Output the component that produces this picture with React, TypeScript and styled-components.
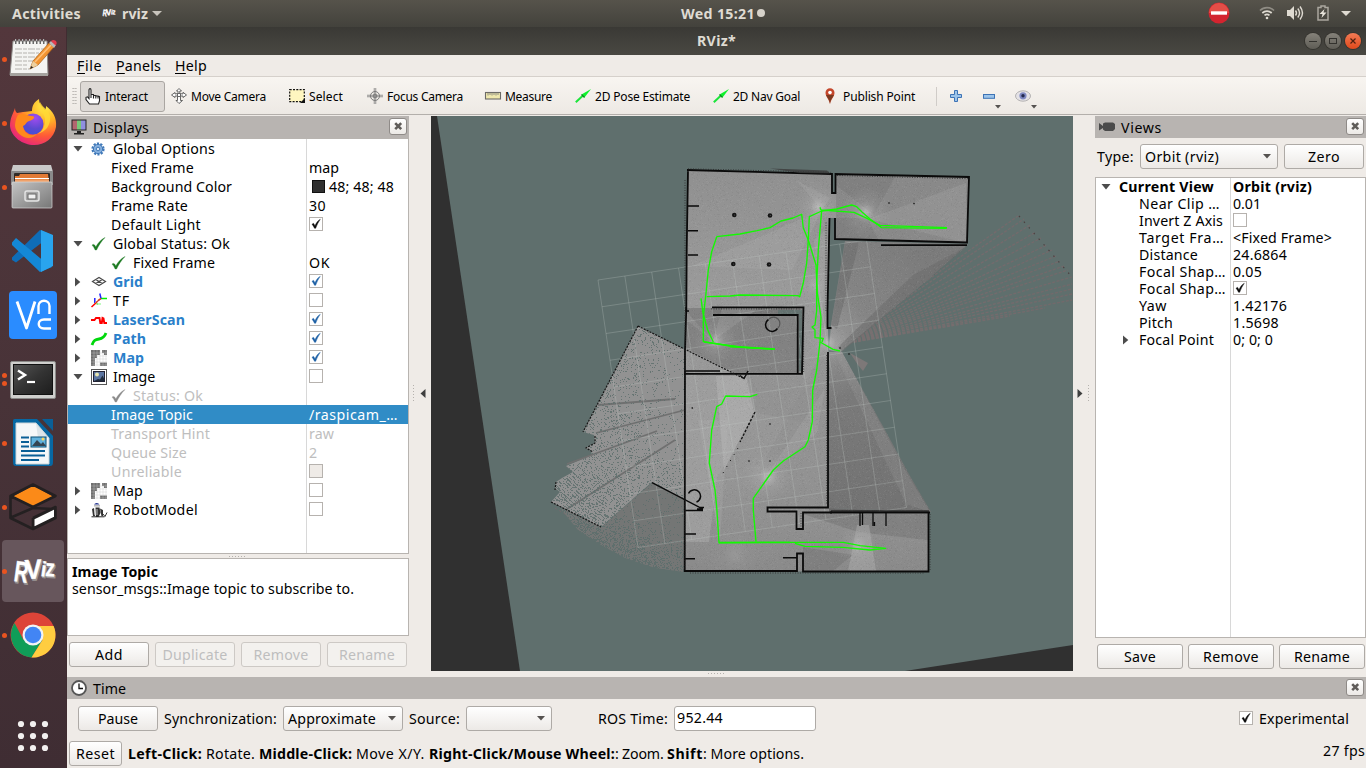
import React, { useLayoutEffect, useRef } from "react";
import styled, { createGlobalStyle, css } from "styled-components";

const GlobalStyle = createGlobalStyle`
  *, *::before, *::after { box-sizing: border-box; }
  body { margin: 0; overflow: hidden; }
  svg { display: block; flex: none; overflow: visible; }
`;

/* ---------- text ---------- */

const TextSpan = styled.span<{ $bold?: boolean }>`
  display: inline-block;
  white-space: pre;
  flex: none;
  ${(p) => p.$bold && css`font-weight: 700;`}
`;

/** Text tracked so that it fills the advance width `w`. */
function Fit({ w, bold, children }: { w: number; bold?: boolean; children: React.ReactNode }) {
  const ref = useRef<HTMLSpanElement>(null);
  useLayoutEffect(() => {
    const el = ref.current;
    if (!el) return;
    el.style.letterSpacing = "0px";
    const natural = el.getBoundingClientRect().width;
    const count = (el.textContent || "").length || 1;
    el.style.letterSpacing = `${(w - natural) / count}px`;
  }, [w, children]);
  return (
    <TextSpan ref={ref} $bold={bold}>
      {children}
    </TextSpan>
  );
}

/* ---------- frame ---------- */

const Screen = styled.div`
  width: 1366px;
  height: 768px;
  display: flex;
  flex-direction: column;
  overflow: hidden;
  background: #efebe7;
  color: #000;
  font: 14.2px/19px "Noto Sans", "Open Sans", sans-serif;
`;

const TopBar = styled.header`
  height: 27px;
  flex: none;
  display: grid;
  grid-template-columns: 681px 1fr auto;
  align-items: center;
  padding-right: 15px;
  padding-bottom: 1px;
  background: linear-gradient(#56534b, #43423c);
  color: #dfdbd2;
  font-weight: 600;
`;
const BarGroup = styled.div<{ $gap?: number; $pad?: number }>`
  display: flex;
  align-items: center;
  gap: ${(p) => p.$gap ?? 0}px;
  padding-left: ${(p) => p.$pad ?? 0}px;
`;
const BarDot = styled.i`
  width: 8px;
  height: 8px;
  border-radius: 50%;
  background: #d6d2ca;
  margin-left: 2px;
`;

const Desktop = styled.div`
  flex: 1;
  min-height: 0;
  display: flex;
`;

const Dock = styled.nav`
  width: 67px;
  flex: none;
  display: flex;
  flex-direction: column;
  gap: 2px;
  padding: 1px 0 0 2px;
  background: linear-gradient(#53373c, #483338 50%, #3f2d33);
  border-right: 1px solid #402c31;
`;
const DockItem = styled.div<{ $active?: boolean; $push?: boolean }>`
  width: 62px;
  height: 62px;
  flex: none;
  display: flex;
  align-items: center;
  border-radius: 4px;
  ${(p) => p.$active && css`background: #67565c;`}
  ${(p) => p.$push && css`margin-top: auto; margin-bottom: 1px;`}
  svg { margin-left: 2px; }
`;
const Running = styled.span`
  width: 5px;
  display: flex;
  flex-direction: column;
  gap: 3px;
  align-items: center;
  flex: none;
  i { width: 5px; height: 5px; border-radius: 50%; background: #e95420; }
`;

const Win = styled.main`
  flex: 1;
  min-width: 0;
  display: flex;
  flex-direction: column;
`;
const TitleBar = styled.div`
  height: 28px;
  flex: none;
  display: flex;
  align-items: center;
  background: linear-gradient(#3a3935, #494842);
  color: #dfdbd2;
  padding: 0 5px 1px 630px;
`;
const WinButtons = styled.div`
  margin-left: auto;
  display: flex;
  gap: 4px;
`;
const WinButton = styled.span<{ $close?: boolean }>`
  width: 16px;
  height: 16px;
  border-radius: 50%;
  display: grid;
  place-items: center;
  background: ${(p) => (p.$close ? "linear-gradient(#f37b55,#e0491b)" : "linear-gradient(#85827a,#5f5d56)")};
  box-shadow: 0 0 0 1px #35342f;
`;

const MenuBar = styled.div`
  height: 22px;
  flex: none;
  display: flex;
  align-items: center;
  gap: 14px;
  padding-left: 10px;
  border-bottom: 1px solid #d5d0cb;
  u { text-underline-offset: 2px; }
`;

const ToolBar = styled.div`
  height: 38px;
  flex: none;
  display: flex;
  align-items: center;
  padding: 1px 0 0 5px;
  background: linear-gradient(#f8f5f1, #ede9e4);
  border-bottom: 1px solid #b3afab;
  font-size: 12px;
`;
const Tool = styled.div<{ $w: number; $on?: boolean }>`
  width: ${(p) => p.$w}px;
  height: 31px;
  flex: none;
  display: flex;
  align-items: center;
  gap: 4px;
  padding-left: 4px;
  border-radius: 3px;
  border: 1px solid transparent;
  ${(p) => p.$on && css`background: #dedad6; border-color: #aaa6a2; margin-right: 1px;`}
`;
const ToolSep = styled.i`
  width: 1px;
  height: 19px;
  background: #d0ccc8;
  margin: 0 13px 0 7px;
`;

const Body = styled.div`
  height: 556px;
  flex: none;
  display: flex;
  padding-top: 1px;
`;

const Grip = styled.i<{ $v?: boolean }>`
  flex: none;
  ${(p) =>
    p.$v
      ? css`width: 4px; height: 18px; background: repeating-linear-gradient(#b5b1ad 0 1px, transparent 1px 3px) 1px 0 / 1px 100% no-repeat;`
      : css`height: 4px; width: 18px; background: repeating-linear-gradient(90deg, #b5b1ad 0 1px, transparent 1px 3px) 0 2px / 100% 1px no-repeat;`}
`;
const ToolGrip = styled.i`
  width: 5px;
  height: 18px;
  margin-right: 3px;
  background: radial-gradient(circle, #b8b4b0 0.7px, transparent 1px) 0 0 / 2.5px 3px repeat;
`;

/* ---------- dock panels ---------- */

const Panel = styled.section<{ $w?: number }>`
  ${(p) => p.$w && css`width: ${p.$w}px;`}
  flex: none;
  display: flex;
  flex-direction: column;
`;
const PanelHead = styled.header`
  height: 22px;
  flex: none;
  display: flex;
  align-items: center;
  background: #b8b4b1;
  gap: 6px;
  padding: 0 2px 0 4px;
`;
const CloseBox = styled.span`
  width: 18px;
  height: 17px;
  margin: -2px 0 0 auto;
  display: grid;
  place-items: center;
  border: 1px solid #8f8b88;
  border-radius: 3px;
  background: linear-gradient(#fff, #ece9e6);
`;

const Tree = styled.div<{ $h: number; $split: number }>`
  height: ${(p) => p.$h}px;
  flex: none;
  border: 1px solid #b8b4b0;
  background: linear-gradient(#d8d8d8, #d8d8d8) ${(p) => p.$split}px 0 / 1px 100% no-repeat, #fff;
`;
const Row = styled.div<{ $h: number; $sel?: boolean; $off?: boolean; $bold?: boolean }>`
  height: ${(p) => p.$h}px;
  display: flex;
  align-items: center;
  ${(p) => p.$off && css`color: #bebebe;`}
  ${(p) => p.$sel && css`background: #308cc6; color: #fff;`}
  ${(p) => p.$bold && css`font-weight: 700;`}
`;
const NameCell = styled.div<{ $w: number; $pad: number; $blue?: boolean }>`
  width: ${(p) => p.$w}px;
  flex: none;
  display: flex;
  align-items: center;
  padding-left: ${(p) => p.$pad}px;
  ${(p) => p.$blue && css`color: #2a7fca; font-weight: 700;`}
`;
const IconSlot = styled.span<{ $w: number }>`
  width: ${(p) => p.$w}px;
  flex: none;
  display: flex;
  align-items: center;
`;
const Box = styled.span<{ $off?: boolean }>`
  width: 14px;
  height: 14px;
  flex: none;
  display: grid;
  place-items: center;
  border: 1px solid #b6b2ae;
  background: ${(p) => (p.$off ? "#efebe7" : "#fff")};
  margin-top: -2px;
`;
const Swatch = styled.i`
  width: 13px;
  height: 13px;
  background: #303030;
  border: 1px solid #111;
  margin: -1px 4px 0 3px;
`;

const HelpBox = styled.div`
  height: 78px;
  flex: none;
  border: 1px solid #b8b4b0;
  background: #fff;
  padding: 4px 4px;
  display: flex;
  flex-direction: column;
  align-items: flex-start;
  line-height: 17px;
`;
const ButtonRow = styled.div<{ $gap: number; $pt: number }>`
  display: flex;
  gap: ${(p) => p.$gap}px;
  padding: ${(p) => p.$pt}px 0 0 2px;
`;
const Button = styled.span<{ $w: number; $off?: boolean; $h?: number }>`
  width: ${(p) => p.$w}px;
  height: ${(p) => p.$h ?? 25}px;
  flex: none;
  display: flex;
  align-items: center;
  justify-content: center;
  border: 1px solid ${(p) => (p.$off ? "#cdc9c5" : "#aeaaa6")};
  border-radius: 3px;
  background: ${(p) => (p.$off ? "#f3f1ee" : "linear-gradient(#fff, #ece9e6)")};
  ${(p) => p.$off && css`color: #bebebe;`}
`;
const Combo = styled(Button)`
  justify-content: space-between;
  padding: 0 6px 0 4px;
`;
const Field = styled(Button)`
  background: #fff;
  justify-content: flex-start;
  padding: 0 0 2px 2px;
`;

const Gutter = styled.div<{ $right?: boolean }>`
  width: 22px;
  flex: none;
  display: flex;
  align-items: center;
  gap: ${(p) => (p.$right ? 4 : 4)}px;
  padding: ${(p) => (p.$right ? "0 0 0 4px" : "0 0 0 3px")};
`;
const GripLine = styled.div<{ $h: number }>`
  height: ${(p) => p.$h}px;
  flex: none;
  display: flex;
  justify-content: center;
`;
const TypeRow = styled.div`
  height: 39px;
  display: flex;
  align-items: center;
  padding: 0 0 2px 2px;
  gap: 6px;
`;
const TimeRow = styled.div`
  height: 40px;
  flex: none;
  display: flex;
  align-items: center;
  padding: 0 17px 1px 11px;
  gap: 6px;
`;
const StatusRow = styled.footer`
  height: 29px;
  flex: none;
  display: flex;
  align-items: center;
  padding-left: 2px;
  gap: 6px;
`;
const StatusText = styled.div`
  display: flex;
`;
const Fps = styled.span`
  margin: -6px 1px 0 auto;
`;
const Spacer = styled.i<{ $w?: number }>`
  ${(p) => (p.$w ? css`width: ${p.$w}px;` : css`flex: 1;`)}
`;

/* ---------- small glyphs ---------- */

const Caret = ({ s = 9 }: { s?: number }) => (
  <svg width={s} height={s / 2 + 0.5} viewBox="0 0 10 5.5"><path d="M0 0h10l-5 5.5z" fill="#555250" /></svg>
);
const Expander = ({ open }: { open: boolean }) =>
  open ? (
    <svg width="10" height="6" viewBox="0 0 10 6"><path d="M.5 0h9L5 5.5z" fill="#4c4c4c" /></svg>
  ) : (
    <svg width="10" height="10" viewBox="0 0 10 10"><path d="M2 .5v9L7.300 5z" fill="#4c4c4c" /></svg>
  );
const Tick = ({ color = "#0a0a0a" }: { color?: string }) => (
  <svg width="10" height="10" viewBox="0 0 10 10">
    <path d="M1 5.200 2.500 4.300 4 6.700C5.200 4 6.600 1.800 9.300.3 7.400 2.900 5.900 6 4.700 9.300H3.500C2.900 7.800 2 6.400 1 5.200Z" fill={color} stroke={color} strokeWidth=".4" />
  </svg>
);
const StatusCheck = ({ color }: { color: string }) => (
  <svg width="15" height="14" viewBox="0 0 15 14">
    <path d="M1 8c1-.8 2-.8 2.600 0l1.200 2C7 6 10 2.600 14 .5 10.500 4.200 7.600 8.400 5.500 13H4.200C3.400 11.200 2.400 9.300 1 8Z" fill={color} stroke={color} strokeWidth=".4" />
  </svg>
);
const Cross = () => (
  <svg width="9" height="9" viewBox="0 0 9 9"><path d="M1.200 1.200l6 6M7.200 1.200l-6 6" stroke="#5f5c59" strokeWidth="2.600" /></svg>
);
const SideArrow = ({ right }: { right?: boolean }) => (
  <svg width="6" height="10" viewBox="0 0 6 10"><path d={right ? "M.5 0v9L5.500 4.500z" : "M5.500 0v9L.5 4.500z"} fill="#3f3f3f" /></svg>
);
const Check = ({ on, blue, off }: { on?: boolean; blue?: boolean; off?: boolean }) => (
  <Box $off={off}>{on && <Tick color={blue ? "#1c5fa5" : undefined} />}</Box>
);

const I: Record<string, React.ReactNode> = {
  gear: (
    <svg width="14" height="14" viewBox="0 0 14 14">
      <circle cx="7" cy="7" r="5.500" fill="none" stroke="#3f78b8" strokeWidth="2.200" strokeDasharray="2.100 1.355" />
      <circle cx="7" cy="7" r="4.600" fill="#86b0de" stroke="#3f78b8" />
      <circle cx="7" cy="7" r="1.800" fill="#d9e7f6" stroke="#3f78b8" />
    </svg>
  ),
  grid: (
    <svg width="16" height="12" viewBox="0 0 16 12"><path d="M1.500 5.500 8 1.500l6.500 4L8 9.500zM4.700 3.500l6.600 4M11.300 3.500l-6.600 4" fill="none" stroke="#4a4a4a" strokeWidth="1.200" /></svg>
  ),
  tf: (
    <svg width="16" height="15" viewBox="0 0 16 15" fill="none" strokeWidth="1.500">
      <path d="M.5 14 6 9M7 7.500l3-2" stroke="#f00" /><path d="M10 5.500h6" stroke="#0e0" /><path d="M5.500 11h4" stroke="#0e0" strokeWidth="1.200" strokeDasharray="2 1" />
      <path d="M3.800 10V5M10 5.500 8.800.5" stroke="#22f" /><path d="M4 10 10 5" stroke="#ff0" strokeWidth=".6" /><path d="M5 9.500l5-4" stroke="#c33" strokeWidth="1.100" />
    </svg>
  ),
  laser: (
    <svg width="16" height="12" viewBox="0 0 16 12"><path d="M0 6h3.500L5 4h3.500l.8 5h1.500L11.500 4l1 .5.8 4.500H16" fill="none" stroke="#f00" strokeWidth="1.900" /></svg>
  ),
  path: (
    <svg width="16" height="14" viewBox="0 0 16 14"><path d="M1 13C2.500 8 4.500 7.500 8 7S13.500 5 15 1" fill="none" stroke="#00d80c" strokeWidth="2.800" /></svg>
  ),
  map: (
    <svg width="16" height="16" viewBox="0 0 16 16">
      <path d="M0 0h9v5H6v3H4v8H0zM11 0h5v5h-3V3h-2zM9 12.500h7V16H9z" fill="#6f6f6f" />
      <path d="M3 0v16M6 0v16M9 0v16M12 0v16M15 0v16M0 3h16M0 6h16M0 9h16M0 12h16M0 15h16" stroke="#c4c4c4" strokeWidth=".4" />
    </svg>
  ),
  image: (
    <svg width="16" height="16" viewBox="0 0 16 16">
      <rect x=".5" y=".5" width="15" height="15" fill="#fff" stroke="#555" /><rect x="2.500" y="2.500" width="11" height="10" fill="#5a74a0" stroke="#223" />
      <circle cx="6" cy="5.500" r="2" fill="#e6e4b0" /><path d="M3 12l4-2 2 .5 2.500-4 1.500 3v2.500z" fill="#202c3c" />
    </svg>
  ),
  robot: (
    <svg width="16" height="16" viewBox="0 0 16 16">
      <path d="M3 2.500a3 2.500 0 0 1 5.500 0z" fill="#1d2e8c" /><path d="M3 3h6v1.600H3z" fill="#bbb" /><path d="M1 7l2-1 1 8H2zM4.500 5.500h4L9.500 11l-2 4H5zM9 6.500l3 1.500v6h-1.600L9.500 9z" fill="#333" />
      <path d="M6 7v6M3.500 7l.5 6" stroke="#ddd" strokeWidth=".8" /><path d="M12 12l2 2.500 2-4" fill="none" stroke="#333" /><path d="M.5 14.800h13" stroke="#222" />
    </svg>
  ),
};

/* ---------- application icons ---------- */

const Notes = () => (
  <svg width="48" height="48" viewBox="0 0 48 48">
    <path d="M4 6h34l1 34H1z" fill="#f4f4f2" stroke="#8d8b88" /><path d="M1 38h38v3H1z" fill="#a5a39f" />
    <path d="M6 6.500h31" stroke="#666" strokeWidth="5" strokeDasharray="1.500 2" /><path d="M6 5h31" stroke="#fff" strokeWidth="1" strokeDasharray="1 2.500" />
    <path d="M6 14h29M6 18h24M6 22h26M6 26h18M6 30h12M6 34h15" stroke="#b3b1ae" strokeWidth="1.200" strokeDasharray="7 1 4 1" />
    <path d="M21 34l3-8L40 8l5 4-16 18z" fill="#f29432" stroke="#a65d12" strokeWidth=".7" /><path d="M26 27 42 10" stroke="#ffc077" strokeWidth="1.600" />
    <path d="M40 8l2-2 5 4-2 3z" fill="#b9b9b9" /><path d="M42 6c3-3 8 1 4.500 4.500z" fill="#e23b4d" /><path d="M21 34l3-8 5 4z" fill="#ecd0a0" /><path d="M21 34l1.200-3 2 1.600z" fill="#222" />
  </svg>
);
const Firefox = () => (
  <svg width="48" height="48" viewBox="0 0 48 48">
    <defs>
      <radialGradient id="ff1" cx=".75" cy=".15" r="1"><stop offset="0" stopColor="#fff14a" /><stop offset=".35" stopColor="#ffb026" /><stop offset=".65" stopColor="#ff5a36" /><stop offset="1" stopColor="#e2198c" /></radialGradient>
      <radialGradient id="ff2" cx=".6" cy=".2" r=".9"><stop offset="0" stopColor="#a24cf0" /><stop offset=".6" stopColor="#5b49d0" /><stop offset="1" stopColor="#3f52d8" /></radialGradient>
    </defs>
    <path d="M6 9c0 3 1 4 2 5l6-1c4 0 6-1 9-1 0-5 2-9 7-12 0 6 4 8 6 11 1-1 1-3 1-4 7 5 11 12 10 21-2 11-11 18-22 18S2 38 1 27C1 19 4 15 6 9z" fill="url(#ff1)" />
    <circle cx="24" cy="25" r="10.500" fill="url(#ff2)" />
    <path d="M9 16c5-3 9 1 14 1 4 0 2 4-3 5-3 1-3 4-6 5 1 8 8 11 14 8-8 9-21 1-22-8 0-4 1-8 3-11z" fill="#ff8a1c" /><path d="M31 3c-2 8 6 11 5 20-1 8-5 11-8 12 9-2 14-9 13-18-1-6-7-8-10-14z" fill="#ffda35" opacity=".8" />
  </svg>
);
const Files = () => (
  <svg width="48" height="48" viewBox="0 0 48 48">
    <defs><linearGradient id="fc" x1="0" y1="0" x2="1" y2="1"><stop offset="0" stopColor="#c4c4c4" /><stop offset="1" stopColor="#777" /></linearGradient></defs>
    <path d="M4 2h38l2 7H2z" fill="#c9c9c9" /><rect x="2" y="8" width="42" height="14" fill="#8a8a8a" /><rect x="5" y="10" width="36" height="9" rx="1" fill="#312b28" />
    <path d="M6 13h4l1-2h28l1 8H6z" fill="#e27a35" /><path d="M6 15.500h34" stroke="#fff" strokeWidth="1.200" /><path d="M6 16.500h34v3H6z" fill="#efa16a" />
    <rect x="3" y="19" width="40" height="26" rx="1" fill="url(#fc)" stroke="#d8d8d8" strokeWidth=".7" /><rect x="16" y="28" width="14" height="10" rx="2" fill="#a7a7a7" stroke="#e3e3e3" strokeWidth="1.500" /><rect x="19" y="31" width="8" height="5" fill="#f0f0f0" stroke="#666" />
  </svg>
);
const Code = () => (
  <svg width="48" height="48" viewBox="0 0 48 48">
    <path d="M3 30.500 31 3l12 5-12 9L7 35.500 3 33z" fill="#0f6db8" /><path d="M3 15.500 7 11l24 20 12 9-12 5L3 18z" fill="#1488d6" /><path d="M32 3l12 5v31l-12 6z" fill="#29a4ee" />
  </svg>
);
const Vnc = () => (
  <svg width="48" height="48" viewBox="0 0 48 48">
    <rect width="48" height="48" rx="4" fill="#2a8cff" /><path d="M8 10.500 17.500 37 26 10.500" fill="none" stroke="#fff" strokeWidth="2.800" strokeLinejoin="round" />
    <path d="M29.500 23v-8c0-7 11-7 11 0v8" fill="none" stroke="#fff" strokeWidth="2.400" /><path d="M42 28.500h-7c-7 0-7 9 0 9h7" fill="none" stroke="#fff" strokeWidth="2.400" />
  </svg>
);
const Terminal = () => (
  <svg width="48" height="48" viewBox="0 0 48 48">
    <defs><linearGradient id="tg" x1="0" y1="0" x2="1" y2="1"><stop offset="0" stopColor="#555" /><stop offset=".5" stopColor="#333" /><stop offset="1" stopColor="#1d1d1d" /></linearGradient></defs>
    <rect x="1.500" y="6.500" width="45" height="37" rx="1.500" fill="#cfcfcd" stroke="#8a8a88" /><rect x="4.500" y="9.500" width="39" height="30" fill="url(#tg)" stroke="#111" />
    <path d="M9 15.500l7 4.500-7 4.500" fill="none" stroke="#fff" strokeWidth="2.500" /><path d="M18 27h8" stroke="#fff" strokeWidth="2.200" />
  </svg>
);
const Writer = () => (
  <svg width="48" height="48" viewBox="0 0 48 48">
    <path d="M6 0h22l16 17v26c0 3-1 4-3 4H7c-2 0-3-1-3-4V3c0-2 0-3 2-3z" fill="#0768a3" /><path d="M33 0h11v12z" fill="#0a5f96" /><path d="M7 4h20l13 15v26H7z" fill="#f5f7f8" stroke="#cdd6da" />
    <path d="M27 4l13 15H29z" fill="#c5d3da" opacity=".5" />
    <path d="M12 18.500h8M12 23h8M12 27.500h8M12 32h24M12 36.500h24M12 41h18" stroke="#0a5f96" strokeWidth="1.800" /><rect x="22" y="18" width="15" height="10" fill="#62b2dc" stroke="#0a5076" /><path d="M23 27l5-6 4 4 2-2 3 4z" fill="#354552" /><circle cx="34" cy="20" r="1.500" fill="#ffd65a" />
  </svg>
);
const Cube = () => (
  <svg width="48" height="48" viewBox="0 0 48 48">
    <path d="M24 2.500 4 13.500 24 24l20-10.500z" fill="#fb8a18" /><path d="M1.500 13 24 1.500 46.500 13 24 24zM1.500 13v22L24 46l22.500-11V24L24 35M24 25 2 34.500M24 25l20 1M24 35v11" fill="none" stroke="#242021" strokeWidth="2.600" strokeLinejoin="round" /><path d="M24.500 35.500 46 25v9.500L24.500 45z" fill="#fff" stroke="#242021" strokeWidth="2" />
  </svg>
);
const Wordmark = styled.svg`
  font: 700 27px "Liberation Sans", sans-serif;
`;
const letters: [string, string][] = [
  ["R", "translate(4 34) rotate(8) scale(.72 1.1)"],
  ["V", "translate(16 32) rotate(-2) scale(.95 1.02)"],
  ["i", "translate(31 29) rotate(8) scale(.75 .78)"],
  ["z", "translate(36 29) rotate(3) scale(.72 .9)"],
];
const Letters = () => (
  <>
    <g fill="#9a9595" stroke="#9a9595" transform="translate(1 1.500)">{letters.map(([c, t]) => <text key={c} transform={t}>{c}</text>)}</g>
    <g fill="#fff" stroke="#fff" strokeWidth=".3">{letters.map(([c, t]) => <text key={c} transform={t}>{c}</text>)}</g>
  </>
);
const Rviz = () => (
  <Wordmark width="48" height="48" viewBox="0 0 48 48"><Letters /></Wordmark>
);
const Chrome = () => (
  <svg width="48" height="48" viewBox="0 0 48 48">
    <circle cx="24" cy="24" r="22.500" fill="#dd4438" /><path d="M5.500 12A22.500 22.500 0 0 0 22.500 46.500L33.500 29 24 24l-9.500 5z" fill="#109d58" /><path d="M44.600 15H24l9.500 14L22.500 46.500A22.500 22.500 0 0 0 44.600 15z" fill="#ffcd40" />
    <circle cx="24" cy="24" r="10.500" fill="#f3f3f3" /><circle cx="24" cy="24" r="8.300" fill="#4285f4" />
  </svg>
);
const Apps = () => (
  <svg width="48" height="48" viewBox="0 0 48 48" fill="#f2f0ef">
    {[12, 24, 36].map((y) => [12, 24, 36].map((x) => <circle key={x + "-" + y} cx={x} cy={y} r="3.100" />))}
  </svg>
);

const apps: { icon: React.ReactNode; dots: number; active?: boolean; push?: boolean }[] = [
  { icon: <Notes />, dots: 1 }, { icon: <Firefox />, dots: 1 }, { icon: <Files />, dots: 1 }, { icon: <Code />, dots: 0 }, { icon: <Vnc />, dots: 0 },
  { icon: <Terminal />, dots: 2 }, { icon: <Writer />, dots: 1 }, { icon: <Cube />, dots: 1 }, { icon: <Rviz />, dots: 1, active: true }, { icon: <Chrome />, dots: 1 }, { icon: <Apps />, dots: 0, push: true },
];

/* ---------- toolbar icons ---------- */

const Hand = () => (
  <svg width="16" height="17" viewBox="0 0 16 17"><path d="M4 9.500V2c0-1.800 2-1.800 2 0v5.500-1h2.500v1h2.300V8h2.200l1.500.7v4.300L13.500 16H4.500L1 11.500V9.300l1.500-.5L4 10.500zM6 7.500v2.500M8.500 7.500v3M10.800 8v2.500M13 8.500v2" fill="#fff" stroke="#222" strokeWidth="1.100" /></svg>
);
const MoveCam = () => (
  <svg width="16" height="16" viewBox="0 0 16 16" fill="#fff" stroke="#555" strokeWidth=".9"><path d="M8 .5 10.500 3h-1.700v2.500L12 6V4.300L15.500 7 12 9.500V8H9.500v4.500h2L8 15.500 5 12.500h1.500V8H4v1.500L.5 7 4 4.500V6l3-.5V3H5.500z" /><circle cx="8" cy="7" r="1.700" /></svg>
);
const Sel = () => (
  <svg width="16" height="14" viewBox="0 0 16 14"><rect x=".7" y=".7" width="14.600" height="12" fill="#fff6c0" stroke="#111" strokeWidth="1.200" strokeDasharray="2 1.300" /><path d="M16 9v5h-5z" fill="#111" /></svg>
);
const Focus = () => (
  <svg width="16" height="16" viewBox="0 0 17 17" fill="none" stroke="#777"><circle cx="8.500" cy="8.500" r="4.800" /><circle cx="8.500" cy="8.500" r="2" /><path d="M7.700 0v17M9.300 0v17M0 7.700h17M0 9.300h17" strokeWidth=".8" /></svg>
);
const Ruler = () => (
  <svg width="16" height="8" viewBox="0 0 16 8"><rect x=".5" y=".5" width="15" height="6.500" fill="#efe8ae" stroke="#6c6a66" strokeWidth="1.100" /><path d="M3 1v2.500M5 1v2M7 1v2.500M9 1v2M11 1v2.500M13 1v2" stroke="#777" strokeWidth=".8" /></svg>
);
const Arrow = () => (
  <svg width="16" height="14" viewBox="0 0 16 14"><path d="M.8 13.200 8 6.500" stroke="#1be53a" strokeWidth="2" /><path d="M16 0 9.500 8.500 6.500 5.500z" fill="#0df22c" /><path d="M6.500 5.500l3 3" stroke="#0a8a1d" strokeWidth="1.200" /></svg>
);
const Pin = () => (
  <svg width="10" height="16" viewBox="0 0 10 16"><path d="M5 16C4 11 .5 8.500.5 4.700a4.500 4.500 0 0 1 9 0C9.500 8.500 6 11 5 16z" fill="#c4472c" /><path d="M5 16C4.500 11 2 9 1 7h8C8 9 5.500 11 5 16z" fill="#7a3a20" /><circle cx="5" cy="4.600" r="1.800" fill="#fff" /></svg>
);
const Plus = () => (
  <svg width="12" height="12" viewBox="0 0 12 12"><path d="M4.500.5h3v4h4v3h-4v4h-3v-4h-4v-3h4z" fill="#9cc4ea" stroke="#3d73b5" /></svg>
);
const Minus = () => (
  <svg width="12" height="5" viewBox="0 0 12 5"><rect x=".5" y=".5" width="11" height="3.800" fill="#9cc4ea" stroke="#3d73b5" /></svg>
);
const Eye = () => (
  <svg width="16" height="12" viewBox="0 0 16 12"><ellipse cx="8" cy="6" rx="7.500" ry="5.200" fill="#e4e2e6" stroke="#b5b3b3" /><circle cx="8" cy="5.800" r="3.600" fill="#7f89c2" /><circle cx="8" cy="5.800" r="1.700" fill="#23294e" /></svg>
);
const DropMark = styled.span`
  align-self: flex-end;
  margin: 0 3px 6px 0;
`;

/* ---------- occupancy map ---------- */

type Pt = [number, number];
const rng = (seed: number) => () => {
  seed = (seed * 1664525 + 1013904223) >>> 0;
  return seed / 4294967296;
};
const inside = (x: number, y: number, poly: Pt[]) => {
  let hit = false;
  for (let i = 0, j = poly.length - 1; i < poly.length; j = i++) {
    const [xi, yi] = poly[i], [xj, yj] = poly[j];
    if (yi > y !== yj > y && x < ((xj - xi) * (y - yi)) / (yj - yi) + xi) hit = !hit;
  }
  return hit;
};
/** Single-cell speckles inside a polygon; density can vary with position. */
const speckle = (poly: Pt[], density: (x: number, y: number) => number, seed: number) => {
  const r = rng(seed);
  const xs = poly.map((p) => p[0]), ys = poly.map((p) => p[1]);
  let d = "";
  for (let y = Math.min(...ys) | 0; y < Math.max(...ys); y++)
    for (let x = Math.min(...xs) | 0; x < Math.max(...xs); x++)
      if (r() < density(x, y) && inside(x, y, poly)) d += `M${x} ${y}h1v1h-1z`;
  return d;
};
const pts = (p: Pt[]) => p.map((q) => q.join(",")).join(" ");

const scanArea: Pt[] = [[638, 326], [684, 349], [684, 499], [652, 482], [601, 527], [551, 502], [560, 492], [555, 488], [556, 482], [562, 478], [573, 472], [566, 466], [592, 455], [591, 451], [585, 448], [595, 443], [594, 435], [583, 432]];
const shadowArea: Pt[] = [[652, 483], [684, 499], [684, 572], [655, 568], [625, 558], [601, 545], [578, 530], [560, 508], [601, 527]];
const mainArea: Pt[] = [[688, 170], [831, 174], [831, 194], [836, 194], [836, 218], [829, 218], [828, 310], [828, 508], [928, 512], [928, 572], [685, 571], [685, 350]];
const northRoom: Pt[] = [[836, 173], [969, 177], [967, 242], [836, 239]];
const fanNE: Pt[] = [[845, 241], [968, 244], [925, 282], [880, 319], [840, 352], [829, 350], [831, 325]];
const fanSE: Pt[] = [[829, 352], [842, 352], [860, 385], [885, 430], [910, 476], [931, 512], [829, 508]];
const fills = [mainArea, northRoom, fanNE, fanSE];
const bounds: Pt[] = [[684, 168], [970, 168], [970, 572], [684, 572]];

const holes = speckle(scanArea, (x, y) => {
  const edge = Math.min(1, Math.hypot(x - 690, y - 400) / 150);
  const ring = Math.sin(Math.hypot(x - 740, y - 385) * 2.2 + Math.atan2(y - 385, 740 - x) * 120);
  return 0.03 + edge * 0.08 + (ring > 0.2 ? 0.42 * edge * edge : 0);
}, 7);
const dimHoles = speckle(shadowArea, (x, y) => 0.05 + Math.max(0, (y - 525 + (650 - x) * 0.6) / 80) * 0.75, 11);
const grainDark = speckle(bounds, (x, y) => (fills.some((a) => inside(x, y, a)) ? 0.1 : 0), 5);
const grainLight = speckle(bounds, (x, y) => (fills.some((a) => inside(x, y, a)) ? 0.1 : 0), 29);

const gridPath = (() => {
  let d = "";
  for (let i = 0; i <= 10; i++) {
    d += `M${598 + 26.85 * i} ${280 - 4 * i}l40 267.500`;
    d += `M${598 + 4 * i} ${280 + 26.75 * i}l268.500 -40`;
  }
  return d;
})();

const beams: Pt[] = [[1018, 216], [1024, 219], [1030, 225], [1036, 232], [1041, 238], [1047, 245], [1052, 250], [1056, 256], [1060, 261], [1064, 266], [1068, 270], [1072, 277], [1072, 284], [1072, 289], [1072, 294], [1072, 300], [1045, 308], [1010, 316]];

const MapCanvas = styled.svg`
  overflow: hidden;
`;

function MapView() {
  return (
    <MapCanvas width="642" height="555" viewBox="431 116 642 555">
      <defs>
        <linearGradient id="mainG" x1="0" y1="0" x2="0" y2="1"><stop offset="0" stopColor="#909090" /><stop offset=".3" stopColor="#9a9a9a" /><stop offset=".75" stopColor="#969696" /><stop offset="1" stopColor="#8a8a8a" /></linearGradient>
        <radialGradient id="glow"><stop offset="0" stopColor="#d0d0d0" stopOpacity=".6" /><stop offset=".4" stopColor="#bcbcbc" stopOpacity=".2" /><stop offset="1" stopColor="#aaa" stopOpacity="0" /></radialGradient>
        <linearGradient id="fanG" gradientUnits="userSpaceOnUse" x1="829" y1="345" x2="925" y2="250"><stop offset="0" stopColor="#9a9a9a" /><stop offset=".35" stopColor="#858585" /><stop offset="1" stopColor="#7b7b7b" /></linearGradient>
        <linearGradient id="fanH" gradientUnits="userSpaceOnUse" x1="835" y1="350" x2="880" y2="500"><stop offset="0" stopColor="#909090" /><stop offset=".3" stopColor="#7a7a7a" /><stop offset="1" stopColor="#737373" /></linearGradient>
        <linearGradient id="beamG" gradientUnits="userSpaceOnUse" x1="860" y1="335" x2="1050" y2="260"><stop offset="0" stopColor="#8a7073" /><stop offset="1" stopColor="#80666a" /></linearGradient>
        <clipPath id="mainClip"><polygon points={pts(mainArea)} /></clipPath>
        <clipPath id="northClip"><polygon points={pts(northRoom)} /></clipPath>
      </defs>
      <rect x="431" y="116" width="642" height="555" fill="#303030" />
      <path d="M437 116H1073V645L905 671H520z" fill="#5f6f6d" />

      <g stroke="url(#beamG)" strokeWidth="1.300" strokeDasharray="3 1.500" opacity=".6">
        {beams.map(([x, y], i) => <path key={i} d={`M836 345L${x} ${y}`} />)}
      </g>
      <path d="M1019 216l53 61" stroke="#4c4040" strokeWidth="1.200" strokeDasharray="1.500 6" />
      <path d="M555 508l50 30 40 24 39 9M566 510l44 24" stroke="#86646a" fill="none" strokeDasharray="2 3" opacity=".6" />

      <polygon points={pts(shadowArea)} fill="#747675" />
      <path d={dimHoles} fill="#5f6f6d" />
      <polygon points={pts(fanNE)} fill="url(#fanG)" />
      <path d="M845 243h14l-22 86-6-4zM968 246 842 352l-4-5 75-72z" fill="#6c6c6c" opacity=".55" />
      <polygon points={pts(fanSE)} fill="url(#fanH)" />
      <path d="M833 350l8 0 64 120 25 42-24-8z" fill="#9a9a9a" opacity=".25" />
      <polygon points={pts(scanArea)} fill="#929292" />
      <g stroke="#707070" strokeWidth="1.800" fill="none"><path d="M598 405l77-6M596 433l89-23M567 464l90-33M567 509l108-69" /></g>
      <path d={holes} fill="#5f706d" opacity=".85" />

      <polygon points={pts(northRoom)} fill="#898989" />
      <g clipPath="url(#northClip)">
        <path d="M836 175l60 0-22 40-38-30zM836 218l32 0 10 22-42 0z" fill="#747474" opacity=".4" />
        <path d="M868 219l50-44M868 219l98-36v60z" fill="#a2a2a2" opacity=".35" />
        <circle cx="866" cy="212" r="26" fill="url(#glow)" />
      </g>
      <polygon points={pts(mainArea)} fill="url(#mainG)" />
      <g clipPath="url(#mainClip)">
        <path d="M685 308h118v66H685z" fill="#828282" />
        <path d="M685 348l60 30-28 0-32-6z" fill="#989898" />
        <path d="M712 309h89v5h-89z" fill="#777" /><path d="M778 310h24v5h-24zM799 315h3v56h-3z" fill="#647270" />
        <path d="M685 376h62l8 36-38 66-8 64h-24z" fill="#9d9d9d" /><path d="M716 376h30l8 36-30 58z" fill="#acacac" opacity=".8" />
        <path d="M760 470l68-130v168h-70z" fill="#8c8c8c" opacity=".35" /><path d="M750 376l5 36 57 12-10-48z" fill="#8c8c8c" opacity=".4" />
        <path d="M803 514h125v26l-70-8zM803 571l0-24 50 8-20 16z" fill="#787878" opacity=".6" /><path d="M857 525h12l7 46h-28z" fill="#b0b0b0" opacity=".45" />
        <path d="M829 508v4h99v-5z" fill="#686868" />
        <g fill="#b8b8b8" opacity=".2"><path d="M713 341l-28-22v-9zM713 341l50-36h-40zM822 210l-26-30 34 18zM822 210l-30 60-100-4zM822 340l-8-100 12-10zM720 540l-22-120 30 0zM765 478l60-90-8 45z" /></g>
        <circle cx="716" cy="341" r="22" fill="url(#glow)" /><circle cx="768" cy="477" r="26" fill="url(#glow)" /><circle cx="818" cy="207" r="22" fill="url(#glow)" />
        <circle cx="814" cy="285" r="18" fill="url(#glow)" opacity=".6" /><circle cx="858" cy="545" r="22" fill="url(#glow)" opacity=".7" /><circle cx="735" cy="555" r="30" fill="url(#glow)" opacity=".3" />
      </g>
      <path d={grainDark} fill="#000" opacity=".04" /><path d={grainLight} fill="#fff" opacity=".05" />
      <circle cx="828" cy="343" r="20" fill="url(#glow)" />
      <path d="M850 353l18 10-5 8-5-6z" fill="#7d7878" />

      <path d={gridPath} stroke="#c8d0ce" strokeWidth="1" fill="none" opacity=".26" />

      {/* walls */}
      <g fill="none" stroke="#0a0a0a" strokeWidth="1.800">
        <path d="M687 170 832 174V193h3.500V174L969 177 967 242.500 835 239V218M829.500 218 827.500 311v17h4M828 352V507.500H767.500V511.500H796.500V529H803V512.500H930M928.500 512V571.500H803V553.500H797V571H684.700L685 351 686.300 308 686.700 250 688 170" />
        <path d="M831 514v-3h98" strokeWidth="1" />
        <path d="M712 307.300H803.500L802 373.800H684M713 315H797.700V373" />
        <path d="M881 245.200H967" />
        <path d="M688 206h11M688 230.700h10M688 255h10M686 307v4h3M685 371h35M685 534h11M685 558.700h10M783 557.700h14" strokeWidth="1.400" />
        <path d="M860 512v14M862.500 513v12M873 512v14M874.500 522v4M886 512v14" strokeWidth="1.300" />
        <path d="M652 482.700 700 507.500h4M697 509h6M685 510.500h18" strokeWidth="1.400" />
        <path d="M768.500 319.500a6.500 6.500 0 1 0 9 9M688.500 493.500a6.300 6.300 0 1 1 8 8.500" strokeWidth="1.500" />
      </g>
      <path d="M769 319a6 6 0 0 1 9 9" fill="none" stroke="#555" strokeWidth="1.200" />
      <g fill="none" stroke="#2a2a2a" strokeWidth="1" strokeDasharray="1 1.500" opacity=".8"><path d="M688 168.800 831 172.300M685 180V570M826.700 355V505M837 175.500 968 178.700M690 573H925M801 513V528M711 308.900h90M803.600 316v56M826 311v-90M930 514v57" /></g>
      <path d="M638 326 744 378.500 748 371M638 326 583 432M595 436v7l-9 5 7 4M556 482l-1 8M551 502l50 25" fill="none" stroke="#151515" strokeWidth="1.200" strokeDasharray="2 1.200" />
      <path d="M740 375.500 744 378.500 748 371" fill="none" stroke="#151515" strokeWidth="1.300" />
      <path d="M755 412 740 442" stroke="#111" strokeWidth="1.300" strokeDasharray="2.500 1.500" /><path d="M738 448 720 478" stroke="#111" strokeDasharray="1 6" />
      <g fill="#141414">
        {[[734.3, 215], [770, 215.5], [733.3, 264], [769, 264.5]].map(([x, y]) => <g key={x + y}><circle cx={x} cy={y} r="2.300" /><circle cx={x + 0.3} cy={y} r=".6" fill="#555" /></g>)}
        {[[889, 203], [914, 203.5], [692.3, 408], [770, 424], [770, 461], [749, 461], [749, 424], [840, 348], [849, 354]].map(([x, y]) => <rect key={x + y} x={x - 0.7} y={y - 0.7} width="1.400" height="1.400" />)}
      </g>
      <path d="M770 168.500l57 2 3 3-30-.5z" fill="#3b3b3b" opacity=".8" />

      {/* planned routes */}
      <g fill="none" stroke="#12fb00" strokeWidth="1.350" strokeLinejoin="round">
        <path d="M716.700 236.700 740 234 757 230.700 770 227.700 781 221 793 218 801.700 214.300 803.300 228 808.300 240 816 265 817.300 293 821 317 820 342 833 349.300 840 351M716.700 236.700 711.700 251.700 708.300 270 706 293.300 703.300 317 703.300 341.700 730 346 753 348 775 349.300" />
        <path d="M701 298.300 703 313 707.700 330 713.300 342M706.700 296.700 730 296 740 295 798.300 295.700 799.700 296.700 803.300 283 806.700 263 808.300 240 809.300 216.700 821.700 211 836.700 209 851.700 205 856.700 206.700 861.700 211.700 870 219 881.700 227.700 946.700 228.300" />
        <path d="M820 207.300l1 2.700 33 2.300 13 6 13 7 67 2.300M821.700 210 818.300 250 816.700 283 816.700 310 815 325 812 327 815 330 815 337.700 823.300 338.300 822 342M820 342 816.700 370 812.700 390 812.300 421.700 808.300 440 805 446.700 783.300 461 773.300 470 753.300 498.300V510L756 541.700" />
        <path d="M757.300 394.300 750 396.700 725.700 396 721.700 404 716.700 406.700 711.700 430 709.300 463 715 490 716.700 507 719 542.700 786.700 542.300 843.300 542.300 860 545.700 885.700 548.300 870 550 843.300 547.300 805 546.300 795 543.300" />
        <path d="M719 542.500H790M704 342 740 347M730 346.700l45 2.300" strokeWidth="1.700" />
      </g>
    </MapCanvas>
  );
}

/* ---------- data ---------- */

type Item = {
  pad: number; open?: boolean; icon?: React.ReactNode; name: string; w: number;
  value?: string; vw?: number; box?: "on" | "blue" | "no" | "off"; swatch?: boolean; blue?: boolean; off?: boolean; sel?: boolean; bold?: boolean;
};
const green = <StatusCheck color="#1c7a22" />;
const displays: Item[] = [
  { pad: 5, open: true, icon: I.gear, name: "Global Options", w: 102 },
  { pad: 43, name: "Fixed Frame", w: 83, value: "map", vw: 30 },
  { pad: 43, name: "Background Color", w: 121, value: "48; 48; 48", vw: 65, swatch: true },
  { pad: 43, name: "Frame Rate", w: 77, value: "30", vw: 17 },
  { pad: 43, name: "Default Light", w: 90, box: "on" },
  { pad: 5, open: true, icon: green, name: "Global Status: Ok", w: 117 },
  { pad: 43, icon: green, name: "Fixed Frame", w: 82, value: "OK", vw: 21 },
  { pad: 5, open: false, icon: I.grid, name: "Grid", w: 30, blue: true, box: "blue" },
  { pad: 5, open: false, icon: I.tf, name: "TF", w: 17, box: "no" },
  { pad: 5, open: false, icon: I.laser, name: "LaserScan", w: 72, blue: true, box: "blue" },
  { pad: 5, open: false, icon: I.path, name: "Path", w: 33, blue: true, box: "blue" },
  { pad: 5, open: false, icon: I.map, name: "Map", w: 31, blue: true, box: "blue" },
  { pad: 5, open: true, icon: I.image, name: "Image", w: 42, box: "no" },
  { pad: 43, icon: <StatusCheck color="#8a8a8a" />, name: "Status: Ok", w: 70, off: true },
  { pad: 43, name: "Image Topic", w: 82, value: "/raspicam_…", vw: 89, sel: true },
  { pad: 43, name: "Transport Hint", w: 99, value: "raw", vw: 25, off: true },
  { pad: 43, name: "Queue Size", w: 76, value: "2", vw: 8, off: true },
  { pad: 43, name: "Unreliable", w: 71, box: "off", off: true },
  { pad: 5, open: false, icon: I.map, name: "Map", w: 30, box: "no" },
  { pad: 5, open: false, icon: I.robot, name: "RobotModel", w: 85, box: "no" },
];
const views: Item[] = [
  { pad: 5, open: true, name: "Current View", w: 95, value: "Orbit (rviz)", vw: 79, bold: true },
  { pad: 43, name: "Near Clip …", w: 81, value: "0.01", vw: 28 },
  { pad: 43, name: "Invert Z Axis", w: 84, box: "no" },
  { pad: 43, name: "Target Fra…", w: 85, value: "<Fixed Frame>", vw: 99 },
  { pad: 43, name: "Distance", w: 59, value: "24.6864", vw: 54 },
  { pad: 43, name: "Focal Shap…", w: 87, value: "0.05", vw: 29 },
  { pad: 43, name: "Focal Shap…", w: 87, box: "on" },
  { pad: 43, name: "Yaw", w: 28, value: "1.42176", vw: 54 },
  { pad: 43, name: "Pitch", w: 34, value: "1.5698", vw: 46 },
  { pad: 25, open: false, name: "Focal Point", w: 75, value: "0; 0; 0", vw: 40 },
];
const TwistySlot = styled.span`
  width: 18px;
  flex: none;
`;

function TreeRow({ item, h, split }: { item: Item; h: number; split: number }) {
  return (
    <Row $h={h} $sel={item.sel} $off={item.off} $bold={item.bold}>
      <NameCell $w={split} $pad={item.pad} $blue={item.blue}>
        {item.open !== undefined && <TwistySlot><Expander open={item.open} /></TwistySlot>}
        {item.icon && <IconSlot $w={22}>{item.icon}</IconSlot>}
        <Fit w={item.w}>{item.name}</Fit>
      </NameCell>
      {item.swatch && <Swatch />}
      {item.value && <Fit w={item.vw ?? 40}>{item.value}</Fit>}
      {item.box && <Check on={item.box === "on" || item.box === "blue"} blue={item.box === "blue"} off={item.box === "off"} />}
    </Row>
  );
}

export default function App() {
  return (
    <Screen>
      <GlobalStyle />
      <TopBar>
        <BarGroup $pad={12}>
          <Fit w={69} bold>Activities</Fit>
          <Spacer $w={20} />
          <Wordmark width="15" height="12" viewBox="0 8 48 34"><Letters /></Wordmark>
          <Spacer $w={6} />
          <Fit w={26} bold>rviz</Fit>
          <Spacer $w={4} />
          <svg width="10" height="5" viewBox="0 0 10 5"><path d="M0 0h10L5 5z" fill="#c8c4bc" /></svg>
        </BarGroup>
        <BarGroup><Fit w={74} bold>Wed 15:21</Fit><BarDot /></BarGroup>
        <BarGroup>
          <svg width="22" height="22" viewBox="0 0 22 22"><circle cx="11" cy="11" r="10.500" fill="#d3242f" /><path d="M1 11a10 10 0 0 1 20 0z" fill="#ee6a58" opacity=".6" /><rect x="3" y="9.300" width="16" height="3.400" fill="#fff" /></svg>
          <Spacer $w={29} />
          <svg width="16" height="14" viewBox="0 0 16 14" fill="none" stroke="#dfdbd2" strokeWidth="1.700"><path d="M1 4.500a10 10 0 0 1 14 0" stroke="#8f8c84" /><path d="M3.300 7a7 7 0 0 1 9.400 0M5.500 9.300a4 4 0 0 1 5 0" /><circle cx="8" cy="12" r="1.300" fill="#dfdbd2" stroke="none" /></svg>
          <Spacer $w={12} />
          <svg width="16" height="14" viewBox="0 0 16 14"><path d="M0 4h3l4-4v14l-4-4H0z" fill="#dfdbd2" /><path d="M8.500 4.500q2 2.500 0 5M10.800 2.500q3.500 4.500 0 9M13 .5q5 6.500 0 13" fill="none" stroke="#dfdbd2" strokeWidth="1.400" /></svg>
          <Spacer $w={14} />
          <svg width="12" height="16" viewBox="0 0 12 16"><path d="M1 2.500h3V1h4v1.500h3V15H1z" fill="none" stroke="#aaa79f" strokeWidth="1.500" /><path d="M7.500 4 2.500 9h3L4.500 13l5-5.500h-3z" fill="#e8e4db" /></svg>
          <Spacer $w={12} />
          <svg width="10" height="5" viewBox="0 0 10 5"><path d="M0 0h10L5 5z" fill="#dfdbd2" /></svg>
        </BarGroup>
      </TopBar>

      <Desktop>
        <Dock>
          {apps.map((a, i) => (
            <DockItem key={i} $active={a.active} $push={a.push}>
              <Running>{Array.from({ length: a.dots }, (_, k) => <i key={k} />)}</Running>
              {a.icon}
            </DockItem>
          ))}
        </Dock>

        <Win>
          <TitleBar>
            <Fit w={39} bold>RViz*</Fit>
            <WinButtons>
              <WinButton><svg width="8" height="8"><path d="M0 4.500h8" stroke="#33322e" /></svg></WinButton>
              <WinButton><svg width="8" height="8"><rect x=".5" y="1.500" width="7" height="5" fill="none" stroke="#33322e" /></svg></WinButton>
              <WinButton $close><svg width="8" height="8"><path d="M1.500 1.500l5 5M6.500 1.500l-5 5" stroke="#50200f" strokeWidth="1.200" /></svg></WinButton>
            </WinButtons>
          </TitleBar>
          <MenuBar>
            <Fit w={25}><u>F</u>ile</Fit>
            <Fit w={45}><u>P</u>anels</Fit>
            <Fit w={32}><u>H</u>elp</Fit>
          </MenuBar>
          <ToolBar>
            <ToolGrip />
            <Tool $w={85} $on><Hand /><Fit w={43}>Interact</Fit></Tool>
            <Tool $w={118}><MoveCam /><Fit w={75}>Move Camera</Fit></Tool>
            <Tool $w={78}><Sel /><Fit w={34}>Select</Fit></Tool>
            <Tool $w={118}><Focus /><Fit w={76}>Focus Camera</Fit></Tool>
            <Tool $w={90}><Ruler /><Fit w={47}>Measure</Fit></Tool>
            <Tool $w={138}><Arrow /><Fit w={95}>2D Pose Estimate</Fit></Tool>
            <Tool $w={112}><Arrow /><Fit w={67}>2D Nav Goal</Fit></Tool>
            <Tool $w={109}><Pin /><Spacer $w={0.1} /><Fit w={72}>Publish Point</Fit></Tool>
            <ToolSep />
            <Plus /><Spacer $w={21} /><Minus />
            <DropMark><Caret s={6} /></DropMark>
            <Spacer $w={11} /><Eye />
            <DropMark><Caret s={6} /></DropMark>
          </ToolBar>

          <Body>
            <Panel $w={342}>
              <PanelHead>
                <svg width="16" height="16" viewBox="0 0 16 16"><rect x=".5" y=".5" width="15" height="11" fill="#222" /><path d="M1.500 1.500H6v9H1.500z" fill="#b3666f" /><path d="M6 1.500h4v9H6z" fill="#78c878" /><path d="M10 1.500h4.500v9H10z" fill="#8f8fe0" /><path d="M6 12h4v2h3v1.500H3V14h3z" fill="#222" /></svg>
                <Fit w={56}>Displays</Fit>
                <CloseBox><Cross /></CloseBox>
              </PanelHead>
              <Tree $h={416} $split={238}>
                {displays.map((d, i) => <TreeRow key={i} item={d} h={19} split={241} />)}
              </Tree>
              <GripLine $h={4}><Grip /></GripLine>
              <HelpBox>
                <Fit w={86} bold>Image Topic</Fit>
                <Fit w={282}>sensor_msgs::Image topic to subscribe to.</Fit>
              </HelpBox>
              <ButtonRow $gap={6} $pt={6}>
                <Button $w={80}><Fit w={28}>Add</Fit></Button>
                <Button $w={80} $off><Fit w={65}>Duplicate</Fit></Button>
                <Button $w={80} $off><Fit w={55}>Remove</Fit></Button>
                <Button $w={80} $off><Fit w={56}>Rename</Fit></Button>
              </ButtonRow>
            </Panel>
            <Gutter><Grip $v /><SideArrow /></Gutter>
            <MapView />
            <Gutter $right><SideArrow right /><Grip $v /></Gutter>
            <Panel $w={271}>
              <PanelHead>
                <svg width="16" height="10" viewBox="0 0 16 10"><path d="M0 1l4 3V1.500L6 .5h8l2 1.500v5l-2 2H6L4 7.500V6L0 8.500z" fill="#4b4b4b" /></svg>
                <Fit w={41}>Views</Fit>
                <CloseBox><Cross /></CloseBox>
              </PanelHead>
              <TypeRow>
                <Fit w={37}>Type:</Fit>
                <Combo $w={138}><Fit w={74}>Orbit (rviz)</Fit><Caret s={8} /></Combo>
                <Button $w={80}><Fit w={32}>Zero</Fit></Button>
              </TypeRow>
              <Tree $h={461} $split={134}>
                {views.map((d, i) => <TreeRow key={i} item={d} h={17} split={137} />)}
              </Tree>
              <ButtonRow $gap={5} $pt={6}>
                <Button $w={86}><Fit w={32}>Save</Fit></Button>
                <Button $w={86}><Fit w={56}>Remove</Fit></Button>
                <Button $w={86}><Fit w={56}>Rename</Fit></Button>
              </ButtonRow>
            </Panel>
          </Body>
          <GripLine $h={6}><Grip /></GripLine>
          <Panel>
            <PanelHead>
              <svg width="16" height="16" viewBox="0 0 16 16"><circle cx="8" cy="8" r="7" fill="#fff" stroke="#555" strokeWidth="1.800" /><path d="M8 3.500V8.500h4" fill="none" stroke="#111" strokeWidth="1.300" /></svg>
              <Fit w={33}>Time</Fit>
              <CloseBox><Cross /></CloseBox>
            </PanelHead>
            <TimeRow>
              <Button $w={80}><Fit w={40}>Pause</Fit></Button>
              <Fit w={113}>Synchronization:</Fit>
              <Combo $w={120}><Fit w={88}>Approximate</Fit><Caret s={8} /></Combo>
              <Fit w={51}>Source:</Fit>
              <Combo $w={86}><i /><Caret s={8} /></Combo>
              <Spacer $w={34} />
              <Fit w={70}>ROS Time:</Fit>
              <Field $w={142}><Fit w={46}>952.44</Fit></Field>
              <Spacer />
              <Check on />
              <Fit w={90}>Experimental</Fit>
            </TimeRow>
          </Panel>
          <StatusRow>
            <Button $w={53} $h={25}><Fit w={39}>Reset</Fit></Button>
            <StatusText>
              <Fit w={78} bold>{"Left-Click: "}</Fit>
              <Fit w={53}>{"Rotate. "}</Fit>
              <Fit w={97} bold>{"Middle-Click: "}</Fit>
              <Fit w={73}>{"Move X/Y. "}</Fit>
              <Fit w={186} bold>Right-Click/Mouse Wheel:</Fit>
              <Fit w={52}>{": Zoom. "}</Fit>
              <Fit w={36} bold>Shift</Fit>
              <Fit w={101}>: More options.</Fit>
            </StatusText>
            <Fps><Fit w={42}>27 fps</Fit></Fps>
          </StatusRow>
        </Win>
      </Desktop>
    </Screen>
  );
}
